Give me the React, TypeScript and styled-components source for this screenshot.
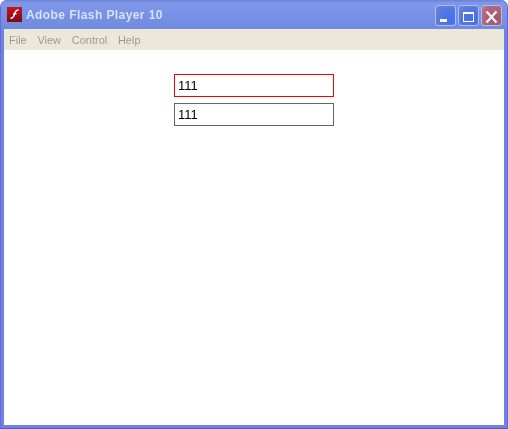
import React from "react";
import styled, { createGlobalStyle } from "styled-components";

const Global = createGlobalStyle`
  html, body { margin: 0; padding: 0; background: #fff; overflow: hidden; }
`;

const Win = styled.div`
  width: 508px;
  height: 429px;
  box-sizing: border-box;
  display: flex;
  flex-direction: column;
  background: #7180e2;
  border-left: 1px solid #5f6dd4;
  border-right: 1px solid #5f6dd4;
  border-bottom: 1px solid #525cc4;
  border-radius: 7px 7px 0 0;
  overflow: hidden;
  font-family: "Liberation Sans", Arial, sans-serif;
  will-change: transform;
`;

const TitleBar = styled.div`
  height: 29px;
  flex: none;
  box-sizing: border-box;
  display: flex;
  align-items: center;
  padding: 0 5px 0 6px;
  background: linear-gradient(180deg, #6c80d6 0%, #7f97e8 10%, #7a93e6 40%, #708ade 100%);
`;

const AppIcon = styled.svg`
  width: 15px;
  height: 15px;
  flex: none;
`;

const Title = styled.div`
  margin-left: 4px;
  flex: 1;
  font-size: 12px;
  font-weight: 700;
  letter-spacing: 0.42px;
  color: #d6e1fb;
  white-space: nowrap;
`;

const Buttons = styled.div`
  display: flex;
  gap: 2px;
  margin-top: 2px;
`;

const Btn = styled.div<{ $close?: boolean }>`
  width: 21px;
  height: 21px;
  box-sizing: border-box;
  border: 1px solid #aebcf0;
  border-radius: 3px;
  display: flex;
  align-items: center;
  justify-content: center;
  background: ${(p) =>
    p.$close
      ? "radial-gradient(circle at 70% 70%, #a35468, #b0687f 70%, #b9808f)"
      : "radial-gradient(circle at 70% 70%, #4470ee, #5679e2 60%, #6f8ade)"};
`;

const Body = styled.div`
  flex: 1;
  min-height: 0;
  margin: 0 3px 3px;
  display: flex;
  flex-direction: column;
`;

const MenuBar = styled.div`
  height: 21px;
  flex: none;
  background: #ebe8d9;
  display: flex;
  align-items: center;
  gap: 10.7px;
  padding: 0 0 0 5px;
`;

const MenuItem = styled.span`
  font-size: 11px;
  color: #9c9b90;
`;

const Stage = styled.div`
  flex: 1;
  background: #fff;
  display: flex;
  flex-direction: column;
  align-items: flex-start;
  gap: 6px;
  padding: 24px 0 0 170px;
`;

const Field = styled.div<{ $focus?: boolean }>`
  width: 160px;
  height: 23px;
  box-sizing: border-box;
  border: 1px solid ${(p) => (p.$focus ? "#ff0000" : "#666666")};
  background: #fff;
  display: flex;
  align-items: center;
  padding-left: 3px;
  font-size: 13px;
  color: #000;
`;

export default function App() {
  return (
    <Win>
      <Global />
      <TitleBar>
        <AppIcon viewBox="0 0 15 15">
          <defs>
            <linearGradient id="flash" x1="0" y1="0" x2="0" y2="1">
              <stop offset="0" stopColor="#c8161c" />
              <stop offset="1" stopColor="#7c0a10" />
            </linearGradient>
          </defs>
          <rect width="15" height="15" fill="url(#flash)" />
          <path d="M11.5 3C8.6 3 8 5 7.3 7.6 6.7 9.9 5.8 11.2 3.4 11.2" fill="none" stroke="#fff" strokeWidth="1.5" />
          <path d="M6 6.8H9.6" stroke="#fff" strokeWidth="1.2" />
        </AppIcon>
        <Title>Adobe Flash Player 10</Title>
        <Buttons>
          <Btn>
            <svg width="19" height="19" viewBox="0 0 19 19" shapeRendering="crispEdges">
              <rect x="4" y="13" width="7" height="3" fill="#fff" />
            </svg>
          </Btn>
          <Btn>
            <svg width="19" height="19" viewBox="0 0 19 19" shapeRendering="crispEdges">
              <path d="M4 6h11v10h-11zM5 8v7h9v-7z" fill="#fff" fillRule="evenodd" />
            </svg>
          </Btn>
          <Btn $close>
            <svg width="19" height="19" viewBox="0 0 19 19">
              <path d="M4.5 5.5L14.5 16.5M14.5 5.5L4.5 16.5" stroke="#f4ecee" strokeWidth="2.5" />
            </svg>
          </Btn>
        </Buttons>
      </TitleBar>
      <Body>
        <MenuBar>
          <MenuItem>File</MenuItem>
          <MenuItem>View</MenuItem>
          <MenuItem>Control</MenuItem>
          <MenuItem>Help</MenuItem>
        </MenuBar>
        <Stage>
          <Field $focus>111</Field>
          <Field>111</Field>
        </Stage>
      </Body>
    </Win>
  );
}
